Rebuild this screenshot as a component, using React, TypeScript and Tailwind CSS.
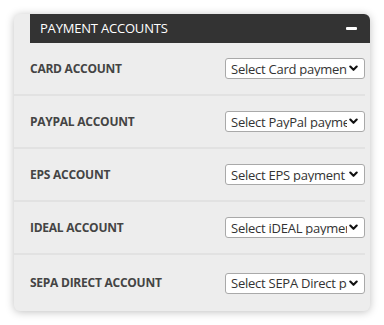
import React from "react";

const rows = [
  { label: "CARD ACCOUNT", placeholder: "Select Card payment account" },
  { label: "PAYPAL ACCOUNT", placeholder: "Select PayPal payment account" },
  { label: "EPS ACCOUNT", placeholder: "Select EPS payment account" },
  { label: "IDEAL ACCOUNT", placeholder: "Select iDEAL payment account" },
  { label: "SEPA DIRECT ACCOUNT", placeholder: "Select SEPA Direct payment account" },
];

function Chevron() {
  return (
    <svg width="9" height="7" viewBox="0 0 9 7" className="shrink-0">
      <path d="M1.3 1.5 L4.5 4.8 L7.7 1.5" fill="none" stroke="#111" strokeWidth="2.1" strokeLinecap="round" strokeLinejoin="round" />
    </svg>
  );
}

export default function App() {
  return (
    <div className="min-h-[325px] w-[384px] bg-white pt-[14px] pl-[14px] font-['Open_Sans',sans-serif]">
      <div className="w-[356px] h-[297px] rounded-md bg-[#ededed] shadow-[0_1px_8px_rgba(0,0,0,0.25)] flex flex-col">
        <div className="ml-4 h-[29px] bg-[#333333] rounded-tr-md flex items-center justify-between pl-[10px] pr-[13px]">
          <span className="text-white text-[13px] tracking-[-0.2px]">PAYMENT ACCOUNTS</span>
          <span className="block w-[11px] h-[3px] bg-white rounded-[1px]" />
        </div>
        {rows.map((r, i) => (
          <div
            key={r.label}
            className={`flex items-center justify-between pl-4 mr-[5px] ${i < rows.length - 1 ? "h-[53px] border-b-2 border-[#e2e2e2]" : "flex-1"}`}
          >
            <span className="text-[12px] font-bold text-[#444] tracking-[-0.25px]">{r.label}</span>
            <div className="w-[140px] h-[21px] bg-white border border-[#a9a9a9] rounded-[3px] flex items-center pl-[5px] pr-[6px] gap-[2px]">
              <span className="flex-1 overflow-hidden whitespace-nowrap text-[13px] text-[#333] leading-none tracking-[-0.25px] pt-px">
                {r.placeholder}
              </span>
              <Chevron />
            </div>
          </div>
        ))}
      </div>
    </div>
  );
}
